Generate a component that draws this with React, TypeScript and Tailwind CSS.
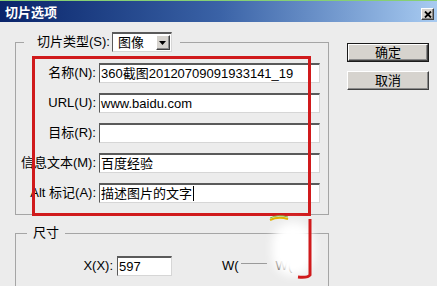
import React from "react";

const sunken =
  "bg-white border-t-2 border-l border-r border-b border-t-[#5a5a5a] border-l-[#5a5a5a] border-r-[#d6d6d6] border-b-[#d6d6d6]";
const raised =
  "bg-[#d6d3ce] border border-t-white border-l-white border-r-[#404040] border-b-[#404040] shadow-[inset_-1px_-1px_0_#8a8a8a]";

function Row({ label, children }: { label: string; children?: React.ReactNode }) {
  return (
    <div className="flex items-center h-[20px]">
      <div className="w-[80px] text-right whitespace-nowrap">{label}</div>
      <div
        className={`ml-[3px] w-[221px] h-[20px] flex items-center pl-[1px] whitespace-nowrap overflow-hidden ${sunken}`}
      >
        {children}
      </div>
    </div>
  );
}

export default function App() {
  return (
    <div className="relative w-[437px] h-[286px] overflow-hidden bg-[#ececec] text-black text-[13px] leading-[16px] font-['Liberation_Sans','Noto_Sans_CJK_SC',sans-serif]">
      {/* title bar */}
      <div className="h-[1px] bg-[#86cf74]" />
      <div className="h-[21px] flex items-start justify-between bg-linear-to-r from-[#0a246a] via-[#3a62a6] to-[#a8cbf1]">
        <span className="ml-[5px] mt-[5px] leading-[14px] text-white font-bold text-[13px]">切片选项</span>
        <div className={`mt-[7px] mr-[3px] w-[13px] h-[12px] flex items-center justify-center ${raised}`}>
          <svg width="8" height="7" viewBox="0 0 8 7">
            <path d="M1 0.5 L7 6.5 M7 0.5 L1 6.5" stroke="#000" strokeWidth="1.8" />
          </svg>
        </div>
      </div>

      {/* body */}
      <div className="flex pl-[15px] pt-[10px]">
        <div className="flex flex-col w-[314px]">
          <fieldset className="border border-[#a5a5a5]">
            <legend className="ml-[8px] pl-[13px] pr-[8px]">
              <div className="flex items-center h-[20px]">
                <span className="whitespace-nowrap">切片类型(S):</span>
                <div className={`ml-[2px] w-[60px] h-[20px] flex items-center justify-between pl-[5px] pr-[1px] ${sunken}`}>
                  <span>图像</span>
                  <div className={`w-[14px] h-[15px] flex items-center justify-center ${raised}`}>
                    <svg width="7" height="4" viewBox="0 0 7 4">
                      <path d="M0 0 H7 L3.5 4 Z" fill="#000" />
                    </svg>
                  </div>
                </div>
              </div>
            </legend>
            <div className="flex flex-col gap-[10px] pt-[11px] pb-[11px]">
              <Row label="名称(N):">360截图20120709091933141_19</Row>
              <Row label="URL(U):">www.baidu.com</Row>
              <Row label="目标(R):" />
              <Row label="信息文本(M):">百度经验</Row>
              <Row label="Alt 标记(A):">
                <span>描述图片的文字</span>
                <span className="ml-[1px] w-[1px] h-[15px] bg-black" />
              </Row>
            </div>
          </fieldset>

          <fieldset className="mt-[10px] border border-[#a5a5a5] h-[90px]">
            <legend className="ml-[11px] px-[6px] leading-[16px]">尺寸</legend>
            <div className="pt-[15px] flex items-center">
              <div className="w-[97px] text-right">X(X):</div>
              <div className={`ml-[4px] w-[55px] h-[20px] flex items-center pl-[1px] ${sunken}`}>597</div>
              <span className="ml-[50px]">W(</span>
              <span className="ml-[2px] mt-[-6px] w-[26px] h-[1px] bg-[#9a9a9a]" />
              <span className="ml-[9px]">W(</span>
            </div>
          </fieldset>
        </div>

        <div className="ml-[18px] pt-[11px] flex flex-col gap-[9px]">
          <div className="w-[82px] h-[19px] border border-[#1a1a1a]">
            <div className={`w-full h-full flex items-center justify-center ${raised}`}>确定</div>
          </div>
          <div className={`w-[82px] h-[19px] flex items-center justify-center ${raised}`}>取消</div>
        </div>
      </div>

      {/* annotations overlay */}
      <div className="absolute left-[32px] top-[56px] w-[279px] h-[160px] border-[3px] border-[#d01a1c]" />
      <div className="absolute left-[272px] top-[222px] w-[42px] h-[54px] rounded-full bg-white blur-[5px]" />
      <svg className="absolute left-0 top-0" width="437" height="286" viewBox="0 0 437 286">
        <path d="M270 220 Q278 216 288 219" stroke="#e0b400" strokeWidth="2" fill="none" />
        <path d="M270 218 Q278 214 288 217" stroke="#7dbb3a" strokeWidth="1" fill="none" />
        <path d="M310 219 L310 275 Q308 278 298 277" stroke="#d01a1c" strokeWidth="3" fill="none" />
      </svg>
    </div>
  );
}
